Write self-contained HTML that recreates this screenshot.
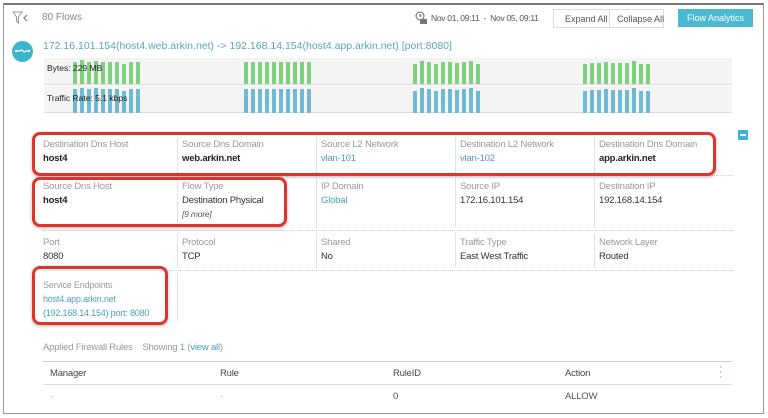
<!DOCTYPE html>
<html><head><style>
*{margin:0;padding:0;box-sizing:border-box}
body{width:768px;height:418px;background:#fff;font-family:"Liberation Sans",sans-serif;position:relative;overflow:hidden;color:#333}
.a{position:absolute;white-space:nowrap}
.frame{position:absolute;left:3px;top:3px;width:761px;height:411px;border:1px solid #999;border-top:2px solid #777}
.lbl{font-size:9.5px;color:#999;letter-spacing:-0.2px}
.val{font-size:9.5px;color:#333;letter-spacing:-0.2px}
.b{font-weight:bold;color:#222}
.lnk{color:#4a9fbf}
.vl{position:absolute;width:1px;background:#e2e2e2}
.hl{position:absolute;height:0;border-top:1px dotted #ccc}
.red{position:absolute;border:3px solid #e0342b;border-radius:8px;box-shadow:0 1px 3px rgba(0,0,0,.3)}
</style></head><body>
<div class="frame"></div>
<svg class="a" style="left:12px;top:10px" width="16" height="16" viewBox="0 0 16 16"><path d="M1 2h9l-3.5 5v6l-2-2V7z" fill="none" stroke="#999" stroke-width="1"/><path d="M15 5l-3 3 3 3" fill="none" stroke="#888" stroke-width="1.3"/></svg>
<div class="a" style="left:42px;top:12px;font-size:10px;color:#888">80 Flows</div>
<svg class="a" style="left:415px;top:11px" width="12" height="13" viewBox="0 0 12 13"><circle cx="5" cy="5" r="4" fill="none" stroke="#666"/><path d="M5 3v2h2" stroke="#666" fill="none"/><rect x="5" y="8" width="7" height="5" fill="#777"/></svg>
<div class="a" style="left:431px;top:13px;font-size:8.5px;color:#555;letter-spacing:-0.3px">Nov 01, 09:11 &nbsp;- &nbsp;Nov 05, 09:11</div>
<div class="a" style="left:553px;top:9px;width:111px;height:19px;border:1px solid #ddd;font-size:9px;color:#555"><span class="a" style="left:11px;top:4px">Expand All</span><span class="a" style="left:55px;top:0;width:1px;height:17px;background:#ddd"></span><span class="a" style="left:63px;top:4px">Collapse All</span></div>
<div class="a" style="left:678px;top:9px;width:75px;height:18px;background:#4cb9d3;color:#fff;font-size:9px;text-align:center;line-height:18px">Flow Analytics</div>
<div class="a" style="left:12px;top:41px;width:21px;height:21px;border-radius:50%;background:#3cb4d0"></div>
<svg class="a" style="left:14px;top:47px" width="17" height="8" viewBox="0 0 17 8"><path d="M2 4h4q2-2 3 0t3 0h3" stroke="#fff" stroke-width="1.2" fill="none"/><circle cx="2" cy="4" r="1.2" fill="#fff"/><circle cx="15" cy="4" r="1.2" fill="#fff"/></svg>
<div class="a lnk" style="left:43px;top:40px;font-size:10.5px;color:#5aa5c4">172.16.101.154(host4.web.arkin.net) -&gt; 192.168.14.154(host4.app.arkin.net) [port:8080]</div>
<div class="a" style="left:44px;top:58px;width:688px;height:27px;background:#f4f4f4;border-bottom:1px solid #ddd"></div>
<div class="a" style="left:44px;top:86px;width:688px;height:27px;background:#f4f4f4;border-bottom:1px solid #ddd"></div>
<svg class="a" style="left:0;top:0" width="768" height="120">
<g fill="#7fd07f">
<rect x="73" y="62" width="4" height="22"/><rect x="80" y="60" width="4" height="24"/><rect x="87" y="62" width="4" height="22"/><rect x="94" y="61" width="4" height="23"/><rect x="101" y="62" width="4" height="22"/><rect x="108" y="62" width="4" height="22"/><rect x="115" y="62" width="4" height="22"/><rect x="122" y="64" width="4" height="20"/><rect x="129" y="62" width="4" height="22"/><rect x="136" y="62" width="4" height="22"/>
<rect x="244" y="62" width="4" height="22"/><rect x="251" y="62" width="4" height="22"/><rect x="258" y="62" width="4" height="22"/><rect x="265" y="62" width="4" height="22"/><rect x="272" y="62" width="4" height="22"/><rect x="279" y="62" width="4" height="22"/><rect x="286" y="62" width="4" height="22"/><rect x="293" y="62" width="4" height="22"/><rect x="300" y="62" width="4" height="22"/><rect x="307" y="62" width="4" height="22"/>
<rect x="413" y="64" width="4" height="20"/><rect x="420" y="61" width="4" height="23"/><rect x="427" y="62" width="4" height="22"/><rect x="434" y="64" width="4" height="20"/><rect x="441" y="62" width="4" height="22"/><rect x="448" y="62" width="4" height="22"/><rect x="455" y="63" width="4" height="21"/><rect x="462" y="62" width="4" height="22"/><rect x="469" y="61" width="4" height="23"/><rect x="476" y="64" width="4" height="20"/>
<rect x="583" y="64" width="4" height="20"/><rect x="590" y="63" width="4" height="21"/><rect x="597" y="63" width="4" height="21"/><rect x="604" y="62" width="4" height="22"/><rect x="611" y="63" width="4" height="21"/><rect x="618" y="63" width="4" height="21"/><rect x="625" y="63" width="4" height="21"/><rect x="632" y="61" width="4" height="23"/><rect x="639" y="64" width="4" height="20"/><rect x="646" y="64" width="4" height="20"/>
</g>
<g fill="#6fb9d2">
<rect x="73" y="89" width="4" height="24"/><rect x="80" y="88" width="4" height="25"/><rect x="87" y="89" width="4" height="24"/><rect x="94" y="88" width="4" height="25"/><rect x="101" y="89" width="4" height="24"/><rect x="108" y="89" width="4" height="24"/><rect x="115" y="89" width="4" height="24"/><rect x="122" y="91" width="4" height="22"/><rect x="129" y="89" width="4" height="24"/><rect x="136" y="89" width="4" height="24"/>
<rect x="244" y="89" width="4" height="24"/><rect x="251" y="89" width="4" height="24"/><rect x="258" y="89" width="4" height="24"/><rect x="265" y="89" width="4" height="24"/><rect x="272" y="89" width="4" height="24"/><rect x="279" y="89" width="4" height="24"/><rect x="286" y="89" width="4" height="24"/><rect x="293" y="89" width="4" height="24"/><rect x="300" y="89" width="4" height="24"/><rect x="307" y="89" width="4" height="24"/>
<rect x="413" y="91" width="4" height="22"/><rect x="420" y="88" width="4" height="25"/><rect x="427" y="89" width="4" height="24"/><rect x="434" y="91" width="4" height="22"/><rect x="441" y="89" width="4" height="24"/><rect x="448" y="89" width="4" height="24"/><rect x="455" y="90" width="4" height="23"/><rect x="462" y="89" width="4" height="24"/><rect x="469" y="88" width="4" height="25"/><rect x="476" y="91" width="4" height="22"/>
<rect x="583" y="91" width="4" height="22"/><rect x="590" y="90" width="4" height="23"/><rect x="597" y="90" width="4" height="23"/><rect x="604" y="89" width="4" height="24"/><rect x="611" y="90" width="4" height="23"/><rect x="618" y="90" width="4" height="23"/><rect x="625" y="90" width="4" height="23"/><rect x="632" y="88" width="4" height="25"/><rect x="639" y="91" width="4" height="22"/><rect x="646" y="91" width="4" height="22"/>
</g></svg>
<div class="a" style="left:47px;top:63px;font-size:8.5px;color:#222">Bytes: 229 MB</div>
<div class="a" style="left:47px;top:93px;font-size:8.5px;color:#222">Traffic Rate: 5.1 kbps</div>

<div class="a" style="left:738px;top:130px;width:10px;height:10px;background:#3cb4d0;border-radius:1px"><div style="position:absolute;left:2px;top:4px;width:6px;height:2px;background:#fff"></div></div>

<div class="hl" style="left:43px;top:175px;width:690px"></div>
<div class="hl" style="left:43px;top:230px;width:690px"></div>
<div class="hl" style="left:43px;top:270px;width:690px"></div>
<div class="vl" style="left:177px;top:137px;height:36px"></div>
<div class="vl" style="left:316px;top:137px;height:36px"></div>
<div class="vl" style="left:455px;top:137px;height:36px"></div>
<div class="vl" style="left:594px;top:137px;height:36px"></div>
<div class="vl" style="left:177px;top:178px;height:50px"></div>
<div class="vl" style="left:316px;top:178px;height:50px"></div>
<div class="vl" style="left:455px;top:178px;height:50px"></div>
<div class="vl" style="left:594px;top:178px;height:50px"></div>
<div class="vl" style="left:177px;top:233px;height:35px"></div>
<div class="vl" style="left:316px;top:233px;height:35px"></div>
<div class="vl" style="left:455px;top:233px;height:35px"></div>
<div class="vl" style="left:594px;top:233px;height:35px"></div>
<div class="vl" style="left:177px;top:273px;height:48px"></div>

<div class="a lbl" style="left:43px;top:139px">Destination Dns Host</div><div class="a val b" style="left:43px;top:153px">host4</div>
<div class="a lbl" style="left:182px;top:139px">Source Dns Domain</div><div class="a val b" style="left:182px;top:153px">web.arkin.net</div>
<div class="a lbl" style="left:321px;top:139px">Source L2 Network</div><div class="a val lnk" style="left:321px;top:153px">vlan-101</div>
<div class="a lbl" style="left:460px;top:139px">Destination L2 Network</div><div class="a val lnk" style="left:460px;top:153px">vlan-102</div>
<div class="a lbl" style="left:599px;top:139px">Destination Dns Domain</div><div class="a val b" style="left:599px;top:153px">app.arkin.net</div>
<div class="a lbl" style="left:43px;top:181px">Source Dns Host</div><div class="a val b" style="left:43px;top:195px">host4</div>
<div class="a lbl" style="left:182px;top:181px">Flow Type</div><div class="a val" style="left:182px;top:195px">Destination Physical</div><div class="a val" style="left:182px;top:209px;font-style:italic;font-size:8.5px;color:#555">[9 more]</div>
<div class="a lbl" style="left:321px;top:181px">IP Domain</div><div class="a val lnk" style="left:321px;top:195px">Global</div>
<div class="a lbl" style="left:460px;top:181px">Source IP</div><div class="a val" style="left:460px;top:195px">172.16.101.154</div>
<div class="a lbl" style="left:599px;top:181px">Destination IP</div><div class="a val" style="left:599px;top:195px">192.168.14.154</div>
<div class="a lbl" style="left:43px;top:237px">Port</div><div class="a val" style="left:43px;top:251px">8080</div>
<div class="a lbl" style="left:182px;top:237px">Protocol</div><div class="a val" style="left:182px;top:251px">TCP</div>
<div class="a lbl" style="left:321px;top:237px">Shared</div><div class="a val" style="left:321px;top:251px">No</div>
<div class="a lbl" style="left:460px;top:237px">Traffic Type</div><div class="a val" style="left:460px;top:251px">East West Traffic</div>
<div class="a lbl" style="left:599px;top:237px">Network Layer</div><div class="a val" style="left:599px;top:251px">Routed</div>
<div class="a lbl" style="left:43px;top:280px;font-size:9px">Service Endpoints</div>
<div class="a val lnk" style="left:43px;top:294px;font-size:9px">host4.app.arkin.net</div>
<div class="a val lnk" style="left:43px;top:308px;font-size:9px">(192.168.14.154) port: 8080</div>

<div class="red" style="left:32px;top:132px;width:684px;height:44px"></div>
<div class="red" style="left:32px;top:177px;width:255px;height:50px"></div>
<div class="red" style="left:32px;top:266px;width:136px;height:59px"></div>

<div class="a lbl" style="left:43px;top:342px">Applied Firewall Rules &nbsp;&nbsp;&nbsp;Showing 1 (<span class="lnk">view all</span>)</div>
<div class="a" style="left:43px;top:361px;width:689px;border-top:1px solid #ccc"></div>
<div class="a val" style="left:50px;top:368px;color:#444">Manager</div>
<div class="a val" style="left:220px;top:368px;color:#444">Rule</div>
<div class="a val" style="left:393px;top:368px;color:#444">RuleID</div>
<div class="a val" style="left:565px;top:368px;color:#444">Action</div>
<div class="a" style="left:719px;top:365px;font-size:11px;color:#4a9fbf;line-height:5px">·<br>·<br>·</div>
<div class="a" style="left:43px;top:384px;width:689px;border-top:1px solid #ddd"></div>
<div class="a val" style="left:50px;top:391px;color:#bbb">-</div>
<div class="a val" style="left:220px;top:391px;color:#bbb">-</div>
<div class="a val" style="left:393px;top:391px;color:#555">0</div>
<div class="a val" style="left:565px;top:391px;color:#555">ALLOW</div>
</body></html>
